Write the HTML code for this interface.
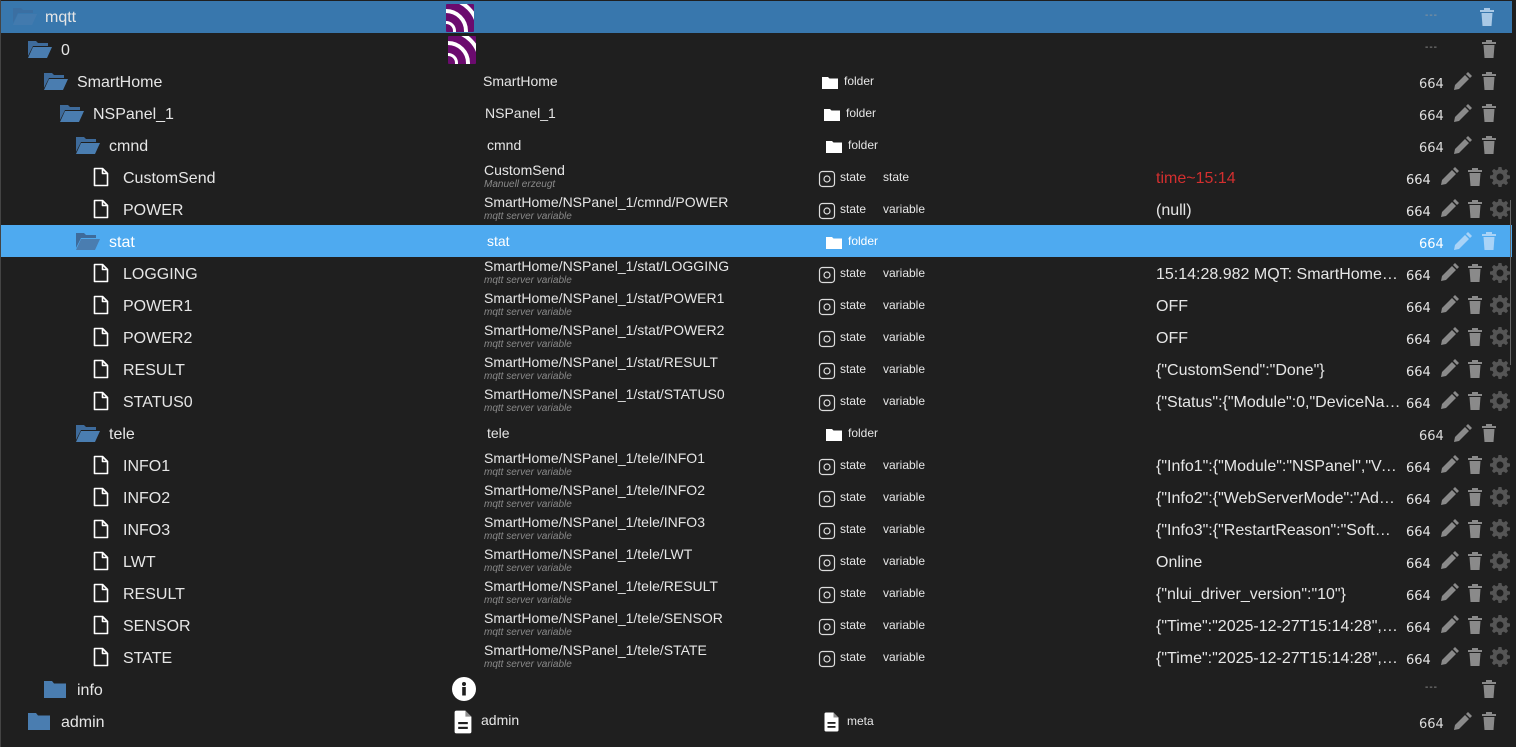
<!DOCTYPE html>
<html><head><meta charset="utf-8">
<style>
*{margin:0;padding:0;box-sizing:border-box}
body{width:1516px;height:747px;background:#1f1f1f;font-family:"Liberation Sans",sans-serif;color:#e6e6e6;overflow:hidden;position:relative}
.r{position:absolute;left:1px;width:1511px;height:32px}
.r.top{background:#3877ad}
.r.sel{background:#4eaaf0}
.n{position:absolute;top:9px;font-size:16px;white-space:nowrap}
.ic{position:absolute;top:6px}
.c2{position:absolute;top:8px;font-size:14px;white-space:nowrap}
.c2.two{top:1px}
.sub{display:block;font-size:10px;font-style:italic;color:#8a8a8a;margin-top:1px}
.ty{position:absolute;left:821px;top:9px;font-size:12px}
.ty svg{position:absolute;left:-4px;top:0}
.ty span{position:absolute;left:18px;top:0}
.ty svg.f{left:0}
.rl{position:absolute;left:882px;top:9px;font-size:12px}
.v{position:absolute;left:1155px;top:9px;font-size:16px;white-space:nowrap;width:245px;overflow:hidden;text-overflow:ellipsis}
.ac{position:absolute;top:12px;font-size:13px;font-family:"DejaVu Sans",sans-serif}
.dash{position:absolute;left:1424px;top:9px;font-size:10px;color:#999;letter-spacing:1px}
.logo{position:absolute;width:28px;height:28px;background:#6b0b6e;overflow:hidden;border-radius:1px}
.logo i{position:absolute;border:4px solid #fff;border-radius:50%}
</style></head><body>
<svg width="0" height="0" style="position:absolute">
<defs>
<symbol id="fo" viewBox="0 0 26 20"><path d="M1 2h8l2 2h10v3H6L1 17z" fill="#3e6b9b"/><path d="M6 8h19l-5 11H1z" fill="#4a7db0"/></symbol>
<symbol id="fc" viewBox="0 0 24 20"><path d="M1 2h8l2 2.5h12V19H1z" fill="#4a7db0"/></symbol>
<symbol id="fi" viewBox="0 0 16 20"><path d="M1.5 1.5h8l5 5v12h-13z M9.5 1.5v5h5" fill="none" stroke="#fff" stroke-width="1.6" stroke-linejoin="round"/></symbol>
<symbol id="tr" viewBox="0 0 16 20"><path d="M1 3h14v2H1z M5 1h6v2H5z M2.5 6h11l-1 13h-9z" fill="currentColor"/></symbol>
<symbol id="pe" viewBox="0 0 20 20"><path d="M2 18l1-5L13 3l4 4L7 17z M14 2l2-2 4 4-2 2z" fill="currentColor"/></symbol>
<symbol id="ge" viewBox="0 0 20 20"><path fill="currentColor" fill-rule="evenodd" d="M8.5 0h3l.5 2.6 1.8.8 2.2-1.5 2.1 2.1-1.5 2.2.8 1.8 2.6.5v3l-2.6.5-.8 1.8 1.5 2.2-2.1 2.1-2.2-1.5-1.8.8-.5 2.6h-3l-.5-2.6-1.8-.8-2.2 1.5-2.1-2.1 1.5-2.2-.8-1.8L0 11.5v-3l2.6-.5.8-1.8-1.5-2.2 2.1-2.1 2.2 1.5 1.8-.8zM10 6.5a3.5 3.5 0 100 7 3.5 3.5 0 000-7z"/></symbol>
<symbol id="st" viewBox="0 0 18 18"><rect x="1.5" y="1.5" width="15" height="15" rx="3" fill="none" stroke="#ddd" stroke-width="1.2"/><circle cx="9" cy="9" r="3" fill="none" stroke="#ddd" stroke-width="1.2"/></symbol>
<symbol id="fw" viewBox="0 0 16 13"><path d="M0 1h6l1.5 1.5H16V13H0z" fill="#fff"/></symbol>
<symbol id="dc" viewBox="0 0 16 20"><path d="M1 2a1.5 1.5 0 011.5-1.5H10l5 5V18a1.5 1.5 0 01-1.5 1.5h-11A1.5 1.5 0 011 18z" fill="#fff"/><path d="M10 .5v5h5" fill="#1f1f1f" opacity=".5"/><rect x="4" y="10" width="8" height="1.8" fill="#1f1f1f"/><rect x="4" y="14" width="8" height="1.8" fill="#1f1f1f"/></symbol>
</defs></svg>

<div class="r top" style="top:1px">
<svg class="ic" style="left:11px;top:5px" width="26" height="20"><use href="#fo" opacity=".6"/></svg>
<div class="n" style="left:44px;top:8px">mqtt</div>
<div class="logo" style="left:445px;top:3px"><i style="left:-22px;top:5px;width:44px;height:44px"></i><i style="left:-34px;top:-7px;width:68px;height:68px"></i><i style="left:-10px;top:17px;width:20px;height:20px;border-width:3px"></i></div>
<div class="dash">---</div>
<svg style="position:absolute;left:1478px;top:6px;color:#a9c9e6" width="16" height="20"><use href="#tr"/></svg>
</div>
<div class="r" style="top:33px">
<svg class="ic" style="left:26px" width="26" height="20"><use href="#fo"/></svg>
<div class="n" style="left:60px">0</div>
<div class="logo" style="left:447px;top:3px"><i style="left:-22px;top:5px;width:44px;height:44px"></i><i style="left:-34px;top:-7px;width:68px;height:68px"></i><i style="left:-10px;top:17px;width:20px;height:20px;border-width:3px"></i></div>
<div class="dash">---</div>
<svg style="position:absolute;left:1480px;top:6px;color:#8a8a8a" width="16" height="20"><use href="#tr"/></svg>
</div>

<div class="r" style="top:65px">
<svg class="ic" style="left:42px" width="26" height="20"><use href="#fo"/></svg>
<div class="n" style="left:76px">SmartHome</div>
<div class="c2" style="left:482px">SmartHome</div>
<div class="ty"><svg class="f" width="16" height="13" style="top:2px"><use href="#fw"/></svg><span style="left:22px">folder</span></div>
<div class="ac" style="left:1418px;color:#ddd">664</div>
<svg style="position:absolute;left:1451px;top:7px;color:#8a8a8a" width="20" height="20"><use href="#pe"/></svg>
<svg style="position:absolute;left:1480px;top:6px;color:#8a8a8a" width="16" height="20"><use href="#tr"/></svg>
</div>
<div class="r" style="top:97px">
<svg class="ic" style="left:58px" width="26" height="20"><use href="#fo"/></svg>
<div class="n" style="left:92px">NSPanel_1</div>
<div class="c2" style="left:484px">NSPanel_1</div>
<div class="ty" style="left:823px"><svg class="f" width="16" height="13" style="top:2px"><use href="#fw"/></svg><span style="left:22px">folder</span></div>
<div class="ac" style="left:1418px;color:#ddd">664</div>
<svg style="position:absolute;left:1451px;top:7px;color:#8a8a8a" width="20" height="20"><use href="#pe"/></svg>
<svg style="position:absolute;left:1480px;top:6px;color:#8a8a8a" width="16" height="20"><use href="#tr"/></svg>
</div>
<div class="r" style="top:129px">
<svg class="ic" style="left:74px" width="26" height="20"><use href="#fo"/></svg>
<div class="n" style="left:108px">cmnd</div>
<div class="c2" style="left:486px">cmnd</div>
<div class="ty" style="left:825px"><svg class="f" width="16" height="13" style="top:2px"><use href="#fw"/></svg><span style="left:22px">folder</span></div>
<div class="ac" style="left:1418px;color:#ddd">664</div>
<svg style="position:absolute;left:1451px;top:7px;color:#8a8a8a" width="20" height="20"><use href="#pe"/></svg>
<svg style="position:absolute;left:1480px;top:6px;color:#8a8a8a" width="16" height="20"><use href="#tr"/></svg>
</div>

<div class="r" style="top:161px">
<svg class="ic" style="left:92px" width="16" height="20"><use href="#fi"/></svg>
<div class="n" style="left:122px">CustomSend</div>
<div class="c2 two" style="left:483px">CustomSend<span class="sub">Manuell erzeugt</span></div>
<div class="ty"><svg width="18" height="18"><use href="#st"/></svg><span>state</span></div>
<div class="rl">state</div>
<div class="v" style="color:#d32f2f">time~15:14</div>
<div class="ac" style="left:1405px">664</div>
<svg style="position:absolute;left:1438px;top:6px;color:#8a8a8a" width="20" height="20"><use href="#pe"/></svg>
<svg style="position:absolute;left:1466px;top:6px;color:#8a8a8a" width="16" height="20"><use href="#tr"/></svg>
<svg style="position:absolute;left:1489px;top:6px;color:#555" width="20" height="20"><use href="#ge"/></svg>
</div>
<div class="r" style="top:193px">
<svg class="ic" style="left:92px" width="16" height="20"><use href="#fi"/></svg>
<div class="n" style="left:122px">POWER</div>
<div class="c2 two" style="left:483px">SmartHome/NSPanel_1/cmnd/POWER<span class="sub">mqtt server variable</span></div>
<div class="ty"><svg width="18" height="18"><use href="#st"/></svg><span>state</span></div>
<div class="rl">variable</div>
<div class="v">(null)</div>
<div class="ac" style="left:1405px">664</div>
<svg style="position:absolute;left:1438px;top:6px;color:#8a8a8a" width="20" height="20"><use href="#pe"/></svg>
<svg style="position:absolute;left:1466px;top:6px;color:#8a8a8a" width="16" height="20"><use href="#tr"/></svg>
<svg style="position:absolute;left:1489px;top:6px;color:#555" width="20" height="20"><use href="#ge"/></svg>
</div>
<div class="r sel" style="top:225px">
<svg class="ic" style="left:74px" width="26" height="20"><use href="#fo"/></svg>
<div class="n" style="left:108px;color:#fff">stat</div>
<div class="c2" style="left:486px;color:#fff">stat</div>
<div class="ty" style="left:825px;color:#fff"><svg class="f" width="16" height="13" style="top:2px"><use href="#fw"/></svg><span style="left:22px">folder</span></div>
<div class="ac" style="left:1418px;color:#fff">664</div>
<svg style="position:absolute;left:1451px;top:7px;color:#a9d3f7" width="20" height="20"><use href="#pe"/></svg>
<svg style="position:absolute;left:1480px;top:6px;color:#a9d3f7" width="16" height="20"><use href="#tr"/></svg>
</div>

<div class="r" style="top:257px"><svg class="ic" style="left:92px" width="16" height="20"><use href="#fi"/></svg><div class="n" style="left:122px">LOGGING</div><div class="c2 two" style="left:483px">SmartHome/NSPanel_1/stat/LOGGING<span class="sub">mqtt server variable</span></div><div class="ty"><svg width="18" height="18"><use href="#st"/></svg><span>state</span></div><div class="rl">variable</div><div class="v">15:14:28.982 MQT: SmartHome/NSPanel_1/stat</div><div class="ac" style="left:1405px">664</div><svg style="position:absolute;left:1438px;top:6px;color:#8a8a8a" width="20" height="20"><use href="#pe"/></svg><svg style="position:absolute;left:1466px;top:6px;color:#8a8a8a" width="16" height="20"><use href="#tr"/></svg><svg style="position:absolute;left:1489px;top:6px;color:#555" width="20" height="20"><use href="#ge"/></svg></div>
<div class="r" style="top:289px"><svg class="ic" style="left:92px" width="16" height="20"><use href="#fi"/></svg><div class="n" style="left:122px">POWER1</div><div class="c2 two" style="left:483px">SmartHome/NSPanel_1/stat/POWER1<span class="sub">mqtt server variable</span></div><div class="ty"><svg width="18" height="18"><use href="#st"/></svg><span>state</span></div><div class="rl">variable</div><div class="v">OFF</div><div class="ac" style="left:1405px">664</div><svg style="position:absolute;left:1438px;top:6px;color:#8a8a8a" width="20" height="20"><use href="#pe"/></svg><svg style="position:absolute;left:1466px;top:6px;color:#8a8a8a" width="16" height="20"><use href="#tr"/></svg><svg style="position:absolute;left:1489px;top:6px;color:#555" width="20" height="20"><use href="#ge"/></svg></div>
<div class="r" style="top:321px"><svg class="ic" style="left:92px" width="16" height="20"><use href="#fi"/></svg><div class="n" style="left:122px">POWER2</div><div class="c2 two" style="left:483px">SmartHome/NSPanel_1/stat/POWER2<span class="sub">mqtt server variable</span></div><div class="ty"><svg width="18" height="18"><use href="#st"/></svg><span>state</span></div><div class="rl">variable</div><div class="v">OFF</div><div class="ac" style="left:1405px">664</div><svg style="position:absolute;left:1438px;top:6px;color:#8a8a8a" width="20" height="20"><use href="#pe"/></svg><svg style="position:absolute;left:1466px;top:6px;color:#8a8a8a" width="16" height="20"><use href="#tr"/></svg><svg style="position:absolute;left:1489px;top:6px;color:#555" width="20" height="20"><use href="#ge"/></svg></div>
<div class="r" style="top:353px"><svg class="ic" style="left:92px" width="16" height="20"><use href="#fi"/></svg><div class="n" style="left:122px">RESULT</div><div class="c2 two" style="left:483px">SmartHome/NSPanel_1/stat/RESULT<span class="sub">mqtt server variable</span></div><div class="ty"><svg width="18" height="18"><use href="#st"/></svg><span>state</span></div><div class="rl">variable</div><div class="v">{"CustomSend":"Done"}</div><div class="ac" style="left:1405px">664</div><svg style="position:absolute;left:1438px;top:6px;color:#8a8a8a" width="20" height="20"><use href="#pe"/></svg><svg style="position:absolute;left:1466px;top:6px;color:#8a8a8a" width="16" height="20"><use href="#tr"/></svg><svg style="position:absolute;left:1489px;top:6px;color:#555" width="20" height="20"><use href="#ge"/></svg></div>
<div class="r" style="top:385px"><svg class="ic" style="left:92px" width="16" height="20"><use href="#fi"/></svg><div class="n" style="left:122px">STATUS0</div><div class="c2 two" style="left:483px">SmartHome/NSPanel_1/stat/STATUS0<span class="sub">mqtt server variable</span></div><div class="ty"><svg width="18" height="18"><use href="#st"/></svg><span>state</span></div><div class="rl">variable</div><div class="v">{"Status":{"Module":0,"DeviceName":"NSPanel"</div><div class="ac" style="left:1405px">664</div><svg style="position:absolute;left:1438px;top:6px;color:#8a8a8a" width="20" height="20"><use href="#pe"/></svg><svg style="position:absolute;left:1466px;top:6px;color:#8a8a8a" width="16" height="20"><use href="#tr"/></svg><svg style="position:absolute;left:1489px;top:6px;color:#555" width="20" height="20"><use href="#ge"/></svg></div>

<div class="r" style="top:417px">
<svg class="ic" style="left:74px" width="26" height="20"><use href="#fo"/></svg>
<div class="n" style="left:108px">tele</div>
<div class="c2" style="left:486px">tele</div>
<div class="ty" style="left:825px"><svg class="f" width="16" height="13" style="top:2px"><use href="#fw"/></svg><span style="left:22px">folder</span></div>
<div class="ac" style="left:1418px;color:#ddd">664</div>
<svg style="position:absolute;left:1451px;top:7px;color:#8a8a8a" width="20" height="20"><use href="#pe"/></svg>
<svg style="position:absolute;left:1480px;top:6px;color:#8a8a8a" width="16" height="20"><use href="#tr"/></svg>
</div>

<div class="r" style="top:449px"><svg class="ic" style="left:92px" width="16" height="20"><use href="#fi"/></svg><div class="n" style="left:122px">INFO1</div><div class="c2 two" style="left:483px">SmartHome/NSPanel_1/tele/INFO1<span class="sub">mqtt server variable</span></div><div class="ty"><svg width="18" height="18"><use href="#st"/></svg><span>state</span></div><div class="rl">variable</div><div class="v">{"Info1":{"Module":"NSPanel","Version":"14</div><div class="ac" style="left:1405px">664</div><svg style="position:absolute;left:1438px;top:6px;color:#8a8a8a" width="20" height="20"><use href="#pe"/></svg><svg style="position:absolute;left:1466px;top:6px;color:#8a8a8a" width="16" height="20"><use href="#tr"/></svg><svg style="position:absolute;left:1489px;top:6px;color:#555" width="20" height="20"><use href="#ge"/></svg></div>
<div class="r" style="top:481px"><svg class="ic" style="left:92px" width="16" height="20"><use href="#fi"/></svg><div class="n" style="left:122px">INFO2</div><div class="c2 two" style="left:483px">SmartHome/NSPanel_1/tele/INFO2<span class="sub">mqtt server variable</span></div><div class="ty"><svg width="18" height="18"><use href="#st"/></svg><span>state</span></div><div class="rl">variable</div><div class="v">{"Info2":{"WebServerMode":"Admin"</div><div class="ac" style="left:1405px">664</div><svg style="position:absolute;left:1438px;top:6px;color:#8a8a8a" width="20" height="20"><use href="#pe"/></svg><svg style="position:absolute;left:1466px;top:6px;color:#8a8a8a" width="16" height="20"><use href="#tr"/></svg><svg style="position:absolute;left:1489px;top:6px;color:#555" width="20" height="20"><use href="#ge"/></svg></div>
<div class="r" style="top:513px"><svg class="ic" style="left:92px" width="16" height="20"><use href="#fi"/></svg><div class="n" style="left:122px">INFO3</div><div class="c2 two" style="left:483px">SmartHome/NSPanel_1/tele/INFO3<span class="sub">mqtt server variable</span></div><div class="ty"><svg width="18" height="18"><use href="#st"/></svg><span>state</span></div><div class="rl">variable</div><div class="v">{"Info3":{"RestartReason":"Software</div><div class="ac" style="left:1405px">664</div><svg style="position:absolute;left:1438px;top:6px;color:#8a8a8a" width="20" height="20"><use href="#pe"/></svg><svg style="position:absolute;left:1466px;top:6px;color:#8a8a8a" width="16" height="20"><use href="#tr"/></svg><svg style="position:absolute;left:1489px;top:6px;color:#555" width="20" height="20"><use href="#ge"/></svg></div>
<div class="r" style="top:545px"><svg class="ic" style="left:92px" width="16" height="20"><use href="#fi"/></svg><div class="n" style="left:122px">LWT</div><div class="c2 two" style="left:483px">SmartHome/NSPanel_1/tele/LWT<span class="sub">mqtt server variable</span></div><div class="ty"><svg width="18" height="18"><use href="#st"/></svg><span>state</span></div><div class="rl">variable</div><div class="v">Online</div><div class="ac" style="left:1405px">664</div><svg style="position:absolute;left:1438px;top:6px;color:#8a8a8a" width="20" height="20"><use href="#pe"/></svg><svg style="position:absolute;left:1466px;top:6px;color:#8a8a8a" width="16" height="20"><use href="#tr"/></svg><svg style="position:absolute;left:1489px;top:6px;color:#555" width="20" height="20"><use href="#ge"/></svg></div>
<div class="r" style="top:577px"><svg class="ic" style="left:92px" width="16" height="20"><use href="#fi"/></svg><div class="n" style="left:122px">RESULT</div><div class="c2 two" style="left:483px">SmartHome/NSPanel_1/tele/RESULT<span class="sub">mqtt server variable</span></div><div class="ty"><svg width="18" height="18"><use href="#st"/></svg><span>state</span></div><div class="rl">variable</div><div class="v">{"nlui_driver_version":"10"}</div><div class="ac" style="left:1405px">664</div><svg style="position:absolute;left:1438px;top:6px;color:#8a8a8a" width="20" height="20"><use href="#pe"/></svg><svg style="position:absolute;left:1466px;top:6px;color:#8a8a8a" width="16" height="20"><use href="#tr"/></svg><svg style="position:absolute;left:1489px;top:6px;color:#555" width="20" height="20"><use href="#ge"/></svg></div>
<div class="r" style="top:609px"><svg class="ic" style="left:92px" width="16" height="20"><use href="#fi"/></svg><div class="n" style="left:122px">SENSOR</div><div class="c2 two" style="left:483px">SmartHome/NSPanel_1/tele/SENSOR<span class="sub">mqtt server variable</span></div><div class="ty"><svg width="18" height="18"><use href="#st"/></svg><span>state</span></div><div class="rl">variable</div><div class="v">{"Time":"2025-12-27T15:14:28","ANALOG"</div><div class="ac" style="left:1405px">664</div><svg style="position:absolute;left:1438px;top:6px;color:#8a8a8a" width="20" height="20"><use href="#pe"/></svg><svg style="position:absolute;left:1466px;top:6px;color:#8a8a8a" width="16" height="20"><use href="#tr"/></svg><svg style="position:absolute;left:1489px;top:6px;color:#555" width="20" height="20"><use href="#ge"/></svg></div>
<div class="r" style="top:641px"><svg class="ic" style="left:92px" width="16" height="20"><use href="#fi"/></svg><div class="n" style="left:122px">STATE</div><div class="c2 two" style="left:483px">SmartHome/NSPanel_1/tele/STATE<span class="sub">mqtt server variable</span></div><div class="ty"><svg width="18" height="18"><use href="#st"/></svg><span>state</span></div><div class="rl">variable</div><div class="v">{"Time":"2025-12-27T15:14:28","Uptime"</div><div class="ac" style="left:1405px">664</div><svg style="position:absolute;left:1438px;top:6px;color:#8a8a8a" width="20" height="20"><use href="#pe"/></svg><svg style="position:absolute;left:1466px;top:6px;color:#8a8a8a" width="16" height="20"><use href="#tr"/></svg><svg style="position:absolute;left:1489px;top:6px;color:#555" width="20" height="20"><use href="#ge"/></svg></div>

<div class="r" style="top:673px">
<svg class="ic" style="left:42px" width="24" height="20"><use href="#fc"/></svg>
<div class="n" style="left:76px">info</div>
<svg style="position:absolute;left:451px;top:4px" width="24" height="24"><circle cx="12" cy="12" r="12" fill="#fff"/><circle cx="12" cy="7" r="2" fill="#1f1f1f"/><rect x="10.2" y="10" width="3.6" height="8.5" fill="#1f1f1f"/></svg>
<div class="dash">---</div>
<svg style="position:absolute;left:1480px;top:6px;color:#8a8a8a" width="16" height="20"><use href="#tr"/></svg>
</div>
<div class="r" style="top:705px">
<svg class="ic" style="left:26px" width="24" height="20"><use href="#fc"/></svg>
<div class="n" style="left:60px">admin</div>
<svg style="position:absolute;left:452px;top:5px" width="20" height="24" viewBox="0 0 16 20"><use href="#dc"/></svg>
<div class="c2" style="left:480px;top:7px">admin</div>
<svg style="position:absolute;left:822px;top:7px" width="17" height="20" viewBox="0 0 16 20"><use href="#dc"/></svg>
<div class="c2" style="left:846px;top:9px;font-size:12px">meta</div>
<div class="ac" style="left:1418px;color:#ddd">664</div>
<svg style="position:absolute;left:1451px;top:7px;color:#8a8a8a" width="20" height="20"><use href="#pe"/></svg>
<svg style="position:absolute;left:1480px;top:6px;color:#8a8a8a" width="16" height="20"><use href="#tr"/></svg>
</div>
<div style="position:absolute;left:1510px;top:200px;width:1px;height:165px;background:#666"></div>
<div style="position:absolute;left:0;top:0;width:1px;height:747px;background:#444"></div>
</body></html>
